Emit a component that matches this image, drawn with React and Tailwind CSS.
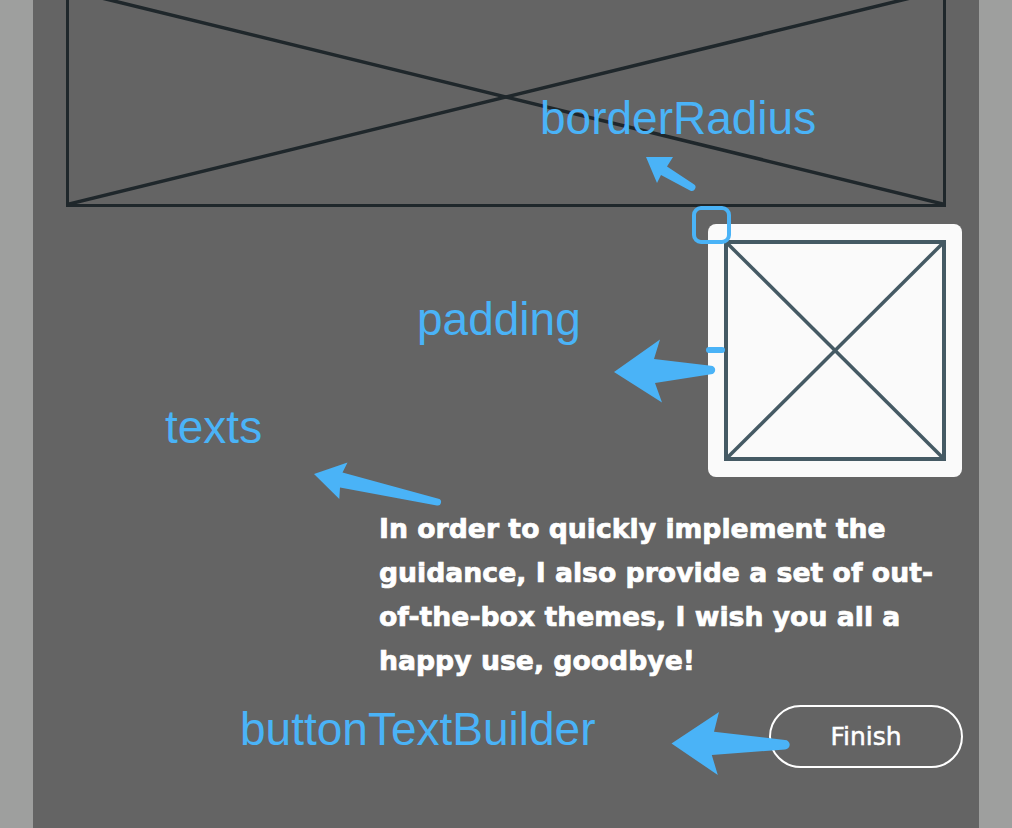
import React from 'react';

const BLUE = '#4ab3f7';

// corner-to-corner cross used by the wireframe placeholders
const Cross = ({ color, width }) => (
  <svg className="absolute inset-0 w-full h-full" viewBox="0 0 100 100" preserveAspectRatio="none">
    <line x1="0" y1="0" x2="100" y2="100" stroke={color} strokeWidth={width} vectorEffect="non-scaling-stroke" />
    <line x1="0" y1="100" x2="100" y2="0" stroke={color} strokeWidth={width} vectorEffect="non-scaling-stroke" />
  </svg>
);

const Label = ({ className, children }) => (
  <span
    className={`absolute whitespace-nowrap text-[46px] leading-[46px] text-[#4ab3f7] font-['Liberation_Sans',Arial,sans-serif] ${className}`}
  >
    {children}
  </span>
);

const Annotations = () => (
  <svg className="absolute inset-0 pointer-events-none" width="1012" height="828" viewBox="0 0 1012 828">
    {/* borderRadius */}
    <path d="M646 157 L673 157 L667 166.5 L693.5 184 A3.6 3.6 0 0 1 690 190.5 L661 175 L657 183 Z" fill={BLUE} />
    {/* padding */}
    <path d="M614 372 L660 339.5 L654 359 L711 365.8 A4.2 4.2 0 0 1 711 374.2 L655 383 L662 402.5 Z" fill={BLUE} />
    {/* texts */}
    <path d="M314 474 L347.5 462.5 L342.5 472.5 L438.5 498.8 A3.4 3.4 0 0 1 436.8 505.4 L340 487.5 L339.3 499 Z" fill={BLUE} />
    {/* buttonTextBuilder */}
    <path d="M671.5 743.5 L719 712 L714 731.8 L785 740 A4.7 4.7 0 0 1 785 749.4 L711.8 755 L717.8 775 Z" fill={BLUE} />
  </svg>
);

const App = () => {
  return (
    <div className="relative w-[1012px] h-[828px] overflow-hidden bg-[#9e9f9e]">
      <div className="mx-[33px] h-full bg-[#646464] flex flex-col">
        {/* header image placeholder */}
        <div className="relative shrink-0 mx-[33px] -mt-[13px] h-[220px] border-[3px] border-[#1f272b]">
          <Cross color="#1f272b" width={3.5} />
        </div>

        {/* image card */}
        <div className="self-end shrink-0 mr-[17px] mt-[17px] w-[254px] h-[253px] rounded-lg bg-[#fafafa] p-4">
          <div className="relative w-full h-full border-4 border-[#455a64]">
            <Cross color="#455a64" width={3.5} />
          </div>
        </div>

        <p className="mt-[30px] ml-[346px] mr-[17px] text-[26.7px] leading-[44px] font-bold text-white font-['DejaVu_Sans',sans-serif] [-webkit-text-stroke:0.7px_white]">
          In order to quickly implement the guidance, I also provide a set of out-of-the-box themes, I wish you all a happy use, goodbye!
        </p>

        <button className="self-end shrink-0 mr-[16px] mt-[22px] w-[194px] h-[63px] rounded-full border-2 border-white text-white text-[25px] font-['DejaVu_Sans',sans-serif] [-webkit-text-stroke:0.5px_white]">
          Finish
        </button>
      </div>

      {/* tutorial annotations */}
      <div className="absolute left-[692px] top-[206px] w-[39px] h-[38px] rounded-[9px] border-4 border-[#4ab3f7]" />
      <div className="absolute left-[706px] top-[347px] w-[19px] h-[6px] rounded-full bg-[#4ab3f7]" />
      <Label className="left-[540px] top-[95px]">borderRadius</Label>
      <Label className="left-[417px] top-[296px]">padding</Label>
      <Label className="left-[165px] top-[404px]">texts</Label>
      <Label className="left-[240px] top-[706px]">buttonTextBuilder</Label>
      <Annotations />
    </div>
  );
};

export default App;
